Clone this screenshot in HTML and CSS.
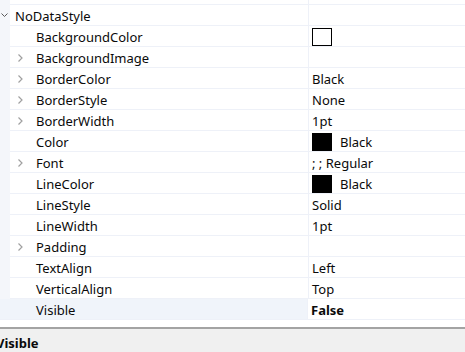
FILE: index.html
```html
<!DOCTYPE html>
<html>

<head>
  <meta charset="UTF-8">
  <title>Properties</title>
  <link rel="stylesheet" href="styles.css">
</head>

<body>

  <div class="grid">
    <div class="row top-row">
      <div class="name"></div>
      <div class="value"></div>
    </div>

    <div class="row group-row">
      <div class="name">
        <span class="toggle"><svg width="7" height="5" viewBox="0 0 7 5"><path d="M0.5 0.5 L3.5 3.5 L6.5 0.5" fill="none" stroke="#5a5a5a" stroke-width="1"/></svg></span>NoDataStyle
      </div>
      <div class="value"></div>
    </div>

    <div class="row">
      <div class="name"><span class="toggle"></span>BackgroundColor</div>
      <div class="value"><span class="swatch empty"></span></div>
    </div>
    <div class="row">
      <div class="name"><span class="toggle"><svg class="chev" width="5" height="8" viewBox="0 0 5 8"><path d="M0.5 0.5 L4 4 L0.5 7.5" fill="none" stroke="#a0a0a0" stroke-width="1.2"/></svg></span>BackgroundImage</div>
      <div class="value"></div>
    </div>
    <div class="row">
      <div class="name"><span class="toggle"><svg class="chev" width="5" height="8" viewBox="0 0 5 8"><path d="M0.5 0.5 L4 4 L0.5 7.5" fill="none" stroke="#a0a0a0" stroke-width="1.2"/></svg></span>BorderColor</div>
      <div class="value">Black</div>
    </div>
    <div class="row">
      <div class="name"><span class="toggle"><svg class="chev" width="5" height="8" viewBox="0 0 5 8"><path d="M0.5 0.5 L4 4 L0.5 7.5" fill="none" stroke="#a0a0a0" stroke-width="1.2"/></svg></span>BorderStyle</div>
      <div class="value">None</div>
    </div>
    <div class="row">
      <div class="name"><span class="toggle"><svg class="chev" width="5" height="8" viewBox="0 0 5 8"><path d="M0.5 0.5 L4 4 L0.5 7.5" fill="none" stroke="#a0a0a0" stroke-width="1.2"/></svg></span>BorderWidth</div>
      <div class="value">1pt</div>
    </div>
    <div class="row">
      <div class="name"><span class="toggle"></span>Color</div>
      <div class="value"><span class="swatch"></span>Black</div>
    </div>
    <div class="row">
      <div class="name"><span class="toggle"><svg class="chev" width="5" height="8" viewBox="0 0 5 8"><path d="M0.5 0.5 L4 4 L0.5 7.5" fill="none" stroke="#a0a0a0" stroke-width="1.2"/></svg></span>Font</div>
      <div class="value">; ; Regular</div>
    </div>
    <div class="row">
      <div class="name"><span class="toggle"></span>LineColor</div>
      <div class="value"><span class="swatch"></span>Black</div>
    </div>
    <div class="row">
      <div class="name"><span class="toggle"></span>LineStyle</div>
      <div class="value">Solid</div>
    </div>
    <div class="row">
      <div class="name"><span class="toggle"></span>LineWidth</div>
      <div class="value">1pt</div>
    </div>
    <div class="row">
      <div class="name"><span class="toggle"><svg class="chev" width="5" height="8" viewBox="0 0 5 8"><path d="M0.5 0.5 L4 4 L0.5 7.5" fill="none" stroke="#a0a0a0" stroke-width="1.2"/></svg></span>Padding</div>
      <div class="value"></div>
    </div>
    <div class="row">
      <div class="name"><span class="toggle"></span>TextAlign</div>
      <div class="value">Left</div>
    </div>
    <div class="row">
      <div class="name"><span class="toggle"></span>VerticalAlign</div>
      <div class="value">Top</div>
    </div>
    <div class="row selected">
      <div class="name"><span class="toggle"></span>Visible</div>
      <div class="value bold">False</div>
    </div>
  </div>

  <div class="help">
    <div class="help-title">Visible</div>
  </div>

</body>

</html>
```

FILE: styles.css
```css
body {
  margin: 0;
  width: 465px;
  height: 352px;
  overflow: hidden;
  font-family: "Noto Sans", "Open Sans", sans-serif;
  font-size: 13px;
  color: #0a0a0a;
  background-color: #fff;
}

.grid {
  height: 329px;
  background-color: #fff;
  background-image: linear-gradient(#f4f6fa, #f4f6fa);
  background-size: 10px 319px;
  background-repeat: no-repeat;
  border-bottom: 2px solid #a3a3a3;
  box-sizing: border-box;
}

.row {
  display: flex;
  height: 21px;
  margin-left: 10px;
  border-bottom: 1px solid #eef1f8;
  box-sizing: border-box;
  line-height: 20px;
  padding-top: 1px;
}

.top-row {
  height: 5px;
  padding-top: 0;
}

.name {
  width: 298px;
  flex: none;
  display: flex;
  align-items: center;
  white-space: nowrap;
  border-right: 1px solid #eef1f8;
  margin-top: -1px;
  padding-top: 1px;
}

.value {
  flex: 1;
  display: flex;
  align-items: center;
  padding-left: 3px;
  white-space: nowrap;
}

.toggle {
  width: 26px;
  flex: none;
  display: flex;
  align-items: center;
  padding-left: 8px;
  box-sizing: border-box;
}

.chev {
  display: block;
  margin-top: 1px;
}

.group-row .name {
  margin-left: -10px;
  width: 308px;
}

.group-row .toggle {
  width: 15px;
  padding-left: 1px;
}

.selected {
  margin-left: 0;
}

.selected .name {
  width: 308px;
  padding-left: 10px;
  box-sizing: border-box;
  background-color: #f0f4fa;
}

.swatch {
  width: 20px;
  height: 18px;
  margin-right: 8px;
  background-color: #000;
  box-sizing: border-box;
  flex: none;
}

.swatch.empty {
  background-color: #fff;
  border: 1.5px solid #000;
}

.bold {
  font-weight: bold;
}

.help {
  height: 23px;
  background-color: #f0f0f0;
}

.help-title {
  margin-left: -4px;
  font-weight: bold;
  line-height: 28px;
}
```
